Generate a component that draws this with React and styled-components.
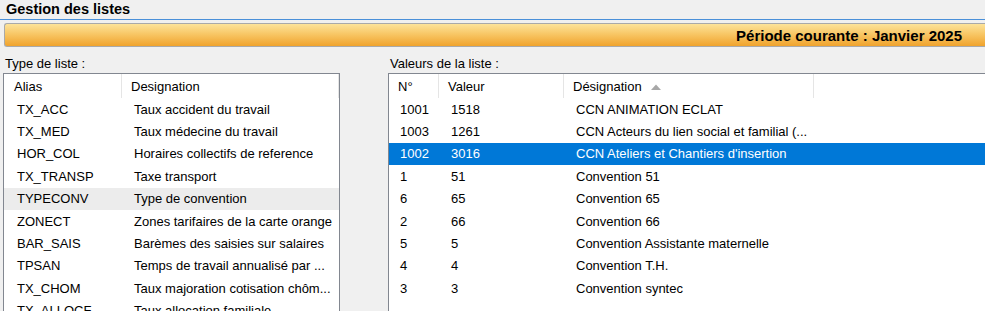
import styled, { createGlobalStyle } from 'styled-components';

const GlobalStyle = createGlobalStyle`
  html, body {
    margin: 0;
    padding: 0;
    background: #f0f0f0;
    overflow: hidden;
  }
  body {
    font-family: "Liberation Sans", Arial, sans-serif;
    font-size: 13px;
    color: #000;
  }
`;

const Page = styled.div`
  width: 985px;
  height: 311px;
  overflow: hidden;
`;

const Title = styled.div`
  height: 20px;
  line-height: 18px;
  padding-left: 6px;
  font-weight: bold;
  font-size: 14.5px;
  border-bottom: 1px solid #4a90d9;
  box-sizing: border-box;
`;

const PeriodBar = styled.div`
  margin: 3px 0 0 4px;
  height: 24px;
  box-sizing: border-box;
  border: 1px solid #a9a9a9;
  border-right: none;
  border-radius: 3px 0 0 3px;
  background: linear-gradient(to bottom, #fde39a 0%, #f8c766 45%, #f0a32d 100%);
  display: flex;
  align-items: center;
  justify-content: flex-end;
  padding-right: 23px;
  font-weight: bold;
  font-size: 15px;
`;

const Panels = styled.div`
  display: flex;
  gap: 48px;
  padding-left: 3px;
  margin-top: 9px;
`;

const Panel = styled.div`
  display: flex;
  flex-direction: column;
  width: ${(p) => p.width}px;
  flex-shrink: 0;
`;

const Label = styled.div`
  height: 15px;
  line-height: 15px;
  padding-left: 2px;
`;

const List = styled.div`
  margin-top: 2px;
  height: 240px;
  background: #fff;
  border: 1px solid #828790;
  border-right: ${(p) => (p.open ? 'none' : '1px solid #828790')};
  border-bottom: none;
  overflow: hidden;
`;

const Row = styled.div`
  display: grid;
  grid-template-columns: ${(p) => p.cols};
  height: ${(p) => (p.header ? '24px' : '22.4px')};
  align-items: center;
  white-space: nowrap;
  background: ${(p) => (p.selected ? '#0078d7' : p.hovered ? '#ececec' : 'transparent')};
  color: ${(p) => (p.selected ? '#fff' : '#000')};
`;

const HeadCell = styled.div`
  height: 100%;
  display: flex;
  align-items: center;
  padding-left: ${(p) => p.pad || 9}px;
  border-right: 1px solid #e5e5e5;
  overflow: hidden;
`;

const Cell = styled.div`
  padding-left: ${(p) => p.pad || 12}px;
  overflow: hidden;
`;

const SortArrow = styled.svg`
  margin-left: 9px;
  margin-top: 1px;
`;

const types = [
  ['TX_ACC', 'Taux accident du travail'],
  ['TX_MED', 'Taux médecine du travail'],
  ['HOR_COL', 'Horaires collectifs de reference'],
  ['TX_TRANSP', 'Taxe transport'],
  ['TYPECONV', 'Type de convention'],
  ['ZONECT', 'Zones tarifaires de la carte orange'],
  ['BAR_SAIS', 'Barèmes des saisies sur salaires'],
  ['TPSAN', 'Temps de travail annualisé par ...'],
  ['TX_CHOM', 'Taux majoration cotisation chôm...'],
  ['TX_ALLOCF', 'Taux allocation familiale'],
];

const values = [
  ['1001', '1518', 'CCN ANIMATION ECLAT'],
  ['1003', '1261', 'CCN Acteurs du lien social et familial (...'],
  ['1002', '3016', "CCN Ateliers et Chantiers d'insertion"],
  ['1', '51', 'Convention 51'],
  ['6', '65', 'Convention 65'],
  ['2', '66', 'Convention 66'],
  ['5', '5', 'Convention Assistante maternelle'],
  ['4', '4', 'Convention T.H.'],
  ['3', '3', 'Convention syntec'],
];

const leftCols = '118px 217px';
const rightCols = '50px 125px 250px 1fr';

export default function App() {
  return (
    <Page>
      <GlobalStyle />
      <Title>Gestion des listes</Title>
      <PeriodBar>Période courante : Janvier 2025</PeriodBar>
      <Panels>
        <Panel width={337}>
          <Label>Type de liste :</Label>
          <List>
            <Row header cols={leftCols}>
              <HeadCell pad={10}>Alias</HeadCell>
              <HeadCell>Designation</HeadCell>
            </Row>
            {types.map(([alias, label]) => (
              <Row key={alias} cols={leftCols} hovered={alias === 'TYPECONV'}>
                <Cell pad={13}>{alias}</Cell>
                <Cell>{label}</Cell>
              </Row>
            ))}
          </List>
        </Panel>
        <Panel width={600}>
          <Label>Valeurs de la liste :</Label>
          <List open>
            <Row header cols={rightCols}>
              <HeadCell>N°</HeadCell>
              <HeadCell>Valeur</HeadCell>
              <HeadCell>
                Désignation
                <SortArrow width="10" height="6" viewBox="0 0 10 6">
                  <path d="M0 6 L5 0.5 L10 6 Z" fill="#a8a8a8" />
                </SortArrow>
              </HeadCell>
              <HeadCell />
            </Row>
            {values.map(([n, v, d]) => (
              <Row key={n} cols={rightCols} selected={n === '1002'}>
                <Cell pad={11}>{n}</Cell>
                <Cell>{v}</Cell>
                <Cell>{d}</Cell>
                <Cell />
              </Row>
            ))}
          </List>
        </Panel>
      </Panels>
    </Page>
  );
}
